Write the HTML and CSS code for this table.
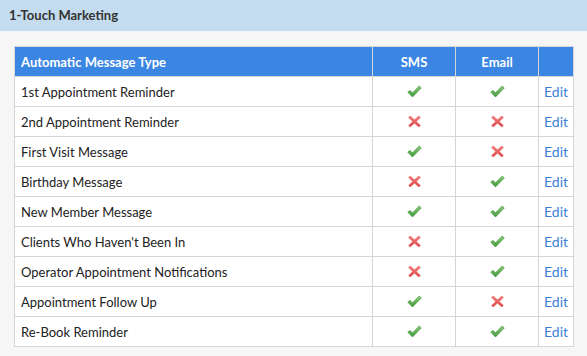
FILE: index.html
```html
<!DOCTYPE html>
<html lang="en">
<head>
    <meta charset="UTF-8">
    <meta name="viewport" content="width=device-width, initial-scale=1.0">
    <title>1-Touch Marketing</title>
    <link rel="stylesheet" href="styles.css">
</head>
<body>
    <div class="panel-title">1-Touch Marketing</div>
    <div class="panel-body">
        <table class="messages">
            <colgroup>
                <col class="col-type">
                <col class="col-flag">
                <col class="col-flag">
                <col class="col-edit">
            </colgroup>
            <thead>
                <tr>
                    <th class="type">Automatic Message Type</th>
                    <th>SMS</th>
                    <th>Email</th>
                    <th></th>
                </tr>
            </thead>
            <tbody id="rows"></tbody>
        </table>
    </div>

    <svg width="0" height="0" class="defs">
        <defs>
            <linearGradient id="gGreen" x1="0" y1="0" x2="0" y2="1">
                <stop offset="0" stop-color="#8fd07a"/>
                <stop offset="1" stop-color="#3f9a3a"/>
            </linearGradient>
            <linearGradient id="gRed" x1="0" y1="0" x2="0" y2="1">
                <stop offset="0" stop-color="#f48080"/>
                <stop offset="1" stop-color="#e04545"/>
            </linearGradient>
        </defs>
    </svg>

    <script>
        const rows = [
            ['1st Appointment Reminder', true, true],
            ['2nd Appointment Reminder', false, false],
            ['First Visit Message', true, false],
            ['Birthday Message', false, true],
            ['New Member Message', true, true],
            ["Clients Who Haven't Been In", false, true],
            ['Operator Appointment Notifications', false, true],
            ['Appointment Follow Up', true, false],
            ['Re-Book Reminder', true, true]
        ];

        const check = '<svg class="icon" width="15" height="13" viewBox="0 0 15 13"><path d="M0.8 7.2 L2.9 5.3 L5.5 7.8 L12.2 1 L14.3 2.9 L5.5 12 Z" fill="url(#gGreen)" stroke="#3c8a36" stroke-width="0.6" stroke-linejoin="round"/></svg>';
        const cross = '<svg class="icon" width="13" height="13" viewBox="0 0 13 13"><path d="M2.2 1 L6.5 4.8 L10.8 1 L12.4 2.6 L8.3 6.5 L12.4 10.4 L10.8 12 L6.5 8.2 L2.2 12 L0.6 10.4 L4.7 6.5 L0.6 2.6 Z" fill="url(#gRed)" stroke="#e05a5a" stroke-width="0.5" stroke-linejoin="round"/></svg>';

        const tbody = document.getElementById('rows');
        rows.forEach(row => {
            const tr = document.createElement('tr');
            tr.innerHTML = `
                <td class="type">${row[0]}</td>
                <td class="flag">${row[1] ? check : cross}</td>
                <td class="flag">${row[2] ? check : cross}</td>
                <td class="edit"><a href="#">Edit</a></td>
            `;
            tbody.appendChild(tr);
        });
    </script>
</body>
</html>
```

FILE: styles.css
```css
body {
    font-family: 'Lato', sans-serif;
    margin: 0;
    padding: 0;
    background-color: #f6f6f6;
    color: #222;
}

.defs {
    position: absolute;
}

.panel-title {
    height: 31px;
    line-height: 31px;
    padding-left: 9px;
    background-color: #c3dcef;
    color: #333;
    font-size: 13px;
    font-weight: 700;
}

.panel-body {
    padding: 15px 14px 0 14px;
}

.messages {
    width: 559px;
    border-collapse: collapse;
    background-color: #fff;
    font-size: 13px;
    table-layout: fixed;
}

.col-type {
    width: 358px;
}

.col-flag {
    width: 83px;
}

.col-edit {
    width: 35px;
}

.messages th,
.messages td {
    border: 1px solid #d6d6d6;
    height: 30px;
    padding: 0 6px;
    box-sizing: border-box;
}

.messages th {
    background-color: #3b86e2;
    color: #fff;
    font-weight: 700;
    text-align: center;
    border-color: #d6d6d6;
}

.messages th.type,
.messages td.type {
    text-align: left;
}

.messages td.flag {
    text-align: center;
    line-height: 0;
}

.icon {
    display: inline-block;
    vertical-align: middle;
}

.messages td.edit {
    padding: 0 0 0 5px;
    font-size: 14px;
}

.edit a {
    color: #3a7fd8;
    text-decoration: none;
}
```
